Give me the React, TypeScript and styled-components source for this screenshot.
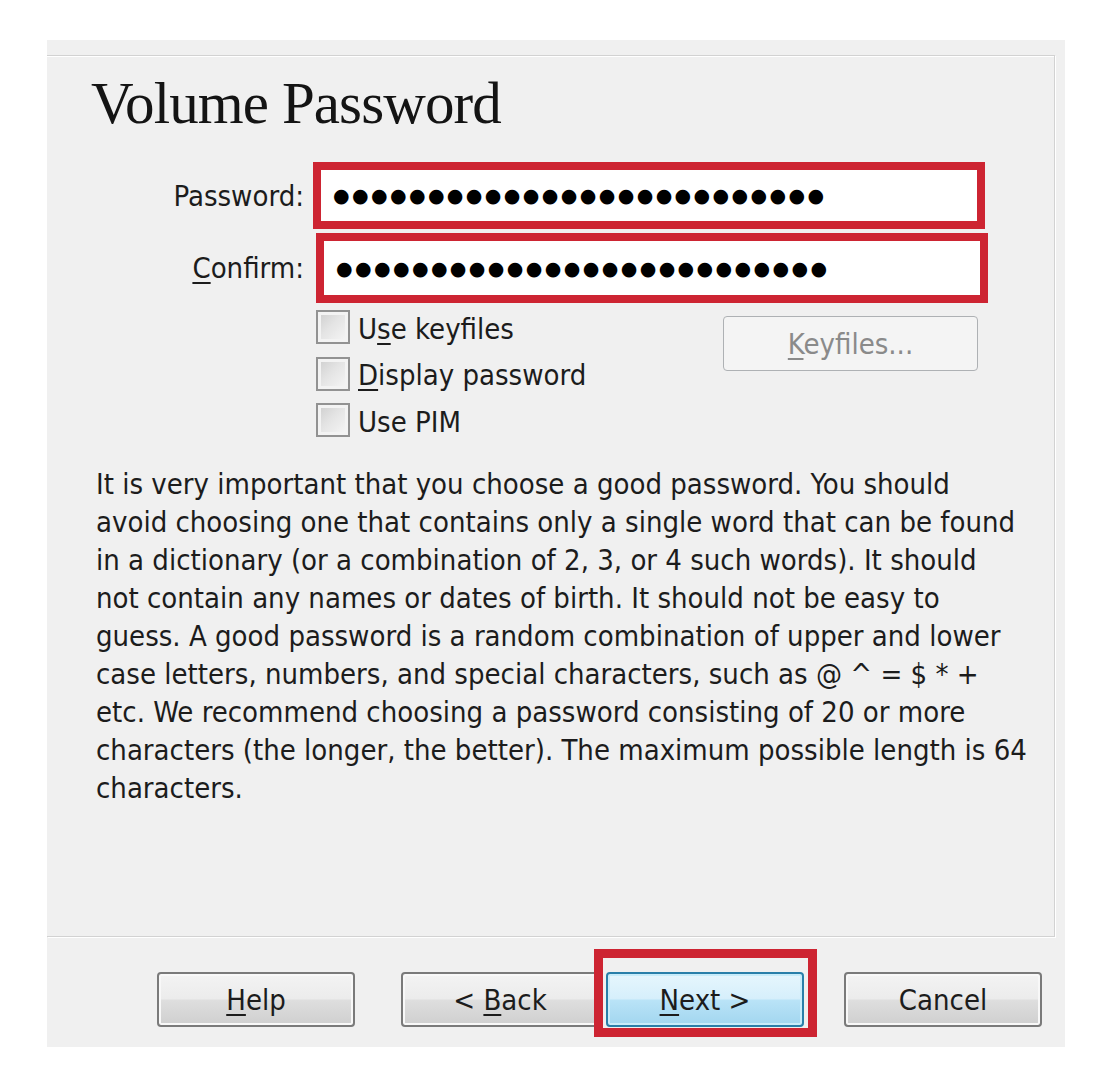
import React from "react";
import styled, { createGlobalStyle, css } from "styled-components";

const Global = createGlobalStyle`
  html, body { margin: 0; padding: 0; background: #ffffff; }
  body { font-family: "DejaVu Sans Condensed", "DejaVu Sans", sans-serif; }
`;

const UI_FONT = `"DejaVu Sans Condensed", "DejaVu Sans", sans-serif`;
const ANNOT = "#cd2432";

const Page = styled.div`
  padding: 40px 0 0 47px;
  min-height: 1078px;
  box-sizing: border-box;
`;

const Dialog = styled.div`
  width: 1018px;
  height: 1007px;
  background: #f0f0f0;
  display: flex;
  flex-direction: column;
  font-family: ${UI_FONT};
  font-stretch: condensed;
  font-size: 29px;
  color: #1c1c1c;
`;

const Frame = styled.section`
  margin-top: 15px;
  width: 1008px;
  height: 882px;
  box-sizing: border-box;
  border-top: 1px solid #d2d2d2;
  border-right: 1px solid #d2d2d2;
  border-bottom: 1px solid #d2d2d2;
  box-shadow: inset 0 1px 0 #ffffff, 1px 1px 0 #ffffff;
  display: flex;
  flex-direction: column;
`;

const Title = styled.h1`
  margin: 18px 0 0 44px;
  font-family: "Liberation Serif", "Times New Roman", serif;
  font-weight: normal;
  font-size: 59px;
  line-height: 58px;
  letter-spacing: -0.9px;
  color: #141414;
`;

const FieldRow = styled.div<{ $top: number }>`
  display: flex;
  align-items: center;
  margin-top: ${(p) => p.$top}px;
`;

const FieldLabel = styled.label`
  width: 257px;
  text-align: right;
  line-height: 34px;
  white-space: nowrap;
`;

const PasswordBox = styled.div<{ $shift: number; $height: number }>`
  margin-left: ${(p) => p.$shift}px;
  width: 672px;
  height: ${(p) => p.$height}px;
  box-sizing: border-box;
  border: 8px solid ${ANNOT};
  background: #ffffff;
  display: flex;
  align-items: center;
  padding-left: 12px;
`;

const Dots = styled.span`
  font-family: "DejaVu Sans", sans-serif;
  font-stretch: normal;
  font-size: 19px;
  line-height: 1;
  letter-spacing: 2.4px;
  color: #000;
  white-space: nowrap;
`;

const Options = styled.div`
  margin: 7px 0 0 269px;
  width: 662px;
  display: flex;
  justify-content: space-between;
  align-items: flex-start;
`;

const CheckList = styled.div`
  display: flex;
  flex-direction: column;
  gap: 12.5px;
`;

const CheckItem = styled.label`
  display: flex;
  align-items: center;
  height: 34px;
  gap: 8px;
  white-space: nowrap;
`;

const CheckBox = styled.span`
  width: 34px;
  height: 34px;
  box-sizing: border-box;
  border: 2px solid #929292;
  background: linear-gradient(135deg, #cdcdcd 0%, #e4e4e4 45%, #f7f7f7 100%);
  box-shadow: inset 0 0 0 3px #f3f3f3;
`;

const CheckText = styled.span`
  line-height: 34px;
  padding-top: 3px;
`;

const KeyfilesButton = styled.button`
  margin-top: 6px;
  width: 255px;
  height: 55px;
  border: 1px solid #aeb1b4;
  border-radius: 4px;
  background: #f4f4f4;
  color: #8a8a8a;
  font-family: ${UI_FONT};
  font-stretch: condensed;
  font-size: 29px;
  padding: 0;
`;

const Explanation = styled.p`
  margin: 28px 0 0 49px;
  line-height: 38px;
`;

const Line = styled.span`
  display: block;
  white-space: nowrap;
`;

const Footer = styled.div`
  display: flex;
  align-items: flex-start;
  padding: 35px 0 0 110px;
`;

const NavButton = styled.button<{ $space: number; $primary?: boolean }>`
  margin-left: ${(p) => p.$space}px;
  width: 198px;
  height: 55px;
  border-radius: 4px;
  font-family: ${UI_FONT};
  font-stretch: condensed;
  font-size: 29px;
  color: #1c1c1c;
  padding: 0;
  ${(p) =>
    p.$primary
      ? css`
          border: 2px solid #2a7fa9;
          background: linear-gradient(#e6f6fd 0%, #d6effb 48%, #b9e3f7 52%, #a2d6ef 100%);
          box-shadow: inset 0 0 0 2px #c8ecfa;
        `
      : css`
          border: 2px solid #7a7a7a;
          background: linear-gradient(#f3f3f3 0%, #ececec 48%, #dedede 52%, #cfcfcf 100%);
          box-shadow: inset 0 0 0 2px #f8f8f8;
        `}
`;

const NextWrap = styled.div`
  position: relative;
  margin-left: 7px;
`;

const Highlight = styled.span`
  position: absolute;
  left: -12px;
  right: -13px;
  top: -23px;
  bottom: -10px;
  border: 9px solid ${ANNOT};
  pointer-events: none;
`;

const Key = styled.u`
  text-decoration-thickness: 2px;
  text-underline-offset: 4px;
`;

const DOTS = "●".repeat(26);

const lines = [
  "It is very important that you choose a good password. You should",
  "avoid choosing one that contains only a single word that can be found",
  "in a dictionary (or a combination of 2, 3, or 4 such words). It should",
  "not contain any names or dates of birth. It should not be easy to",
  "guess. A good password is a random combination of upper and lower",
  "case letters, numbers, and special characters, such as @ ^ = $ * +",
  "etc. We recommend choosing a password consisting of 20 or more",
  "characters (the longer, the better). The maximum possible length is 64",
  "characters.",
];

export default function App() {
  return (
    <>
      <Global />
      <Page>
        <Dialog>
          <Frame>
            <Title>Volume Password</Title>
            <FieldRow $top={30}>
              <FieldLabel>Password:</FieldLabel>
              <PasswordBox $shift={9} $height={67}>
                <Dots>{DOTS}</Dots>
              </PasswordBox>
            </FieldRow>
            <FieldRow $top={4}>
              <FieldLabel>
                <Key>C</Key>onfirm:
              </FieldLabel>
              <PasswordBox $shift={12} $height={70}>
                <Dots>{DOTS}</Dots>
              </PasswordBox>
            </FieldRow>
            <Options>
              <CheckList>
                <CheckItem>
                  <CheckBox />
                  <CheckText>
                    U<Key>s</Key>e keyfiles
                  </CheckText>
                </CheckItem>
                <CheckItem>
                  <CheckBox />
                  <CheckText>
                    <Key>D</Key>isplay password
                  </CheckText>
                </CheckItem>
                <CheckItem>
                  <CheckBox />
                  <CheckText>Use PIM</CheckText>
                </CheckItem>
              </CheckList>
              <KeyfilesButton disabled>
                <Key>K</Key>eyfiles...
              </KeyfilesButton>
            </Options>
            <Explanation>
              {lines.map((l) => (
                <Line key={l}>{l}</Line>
              ))}
            </Explanation>
          </Frame>
          <Footer>
            <NavButton $space={0}>
              <Key>H</Key>elp
            </NavButton>
            <NavButton $space={46}>
              &lt; <Key>B</Key>ack
            </NavButton>
            <NextWrap>
              <NavButton $space={0} $primary>
                <Key>N</Key>ext &gt;
              </NavButton>
              <Highlight />
            </NextWrap>
            <NavButton $space={40}>Cancel</NavButton>
          </Footer>
        </Dialog>
      </Page>
    </>
  );
}
